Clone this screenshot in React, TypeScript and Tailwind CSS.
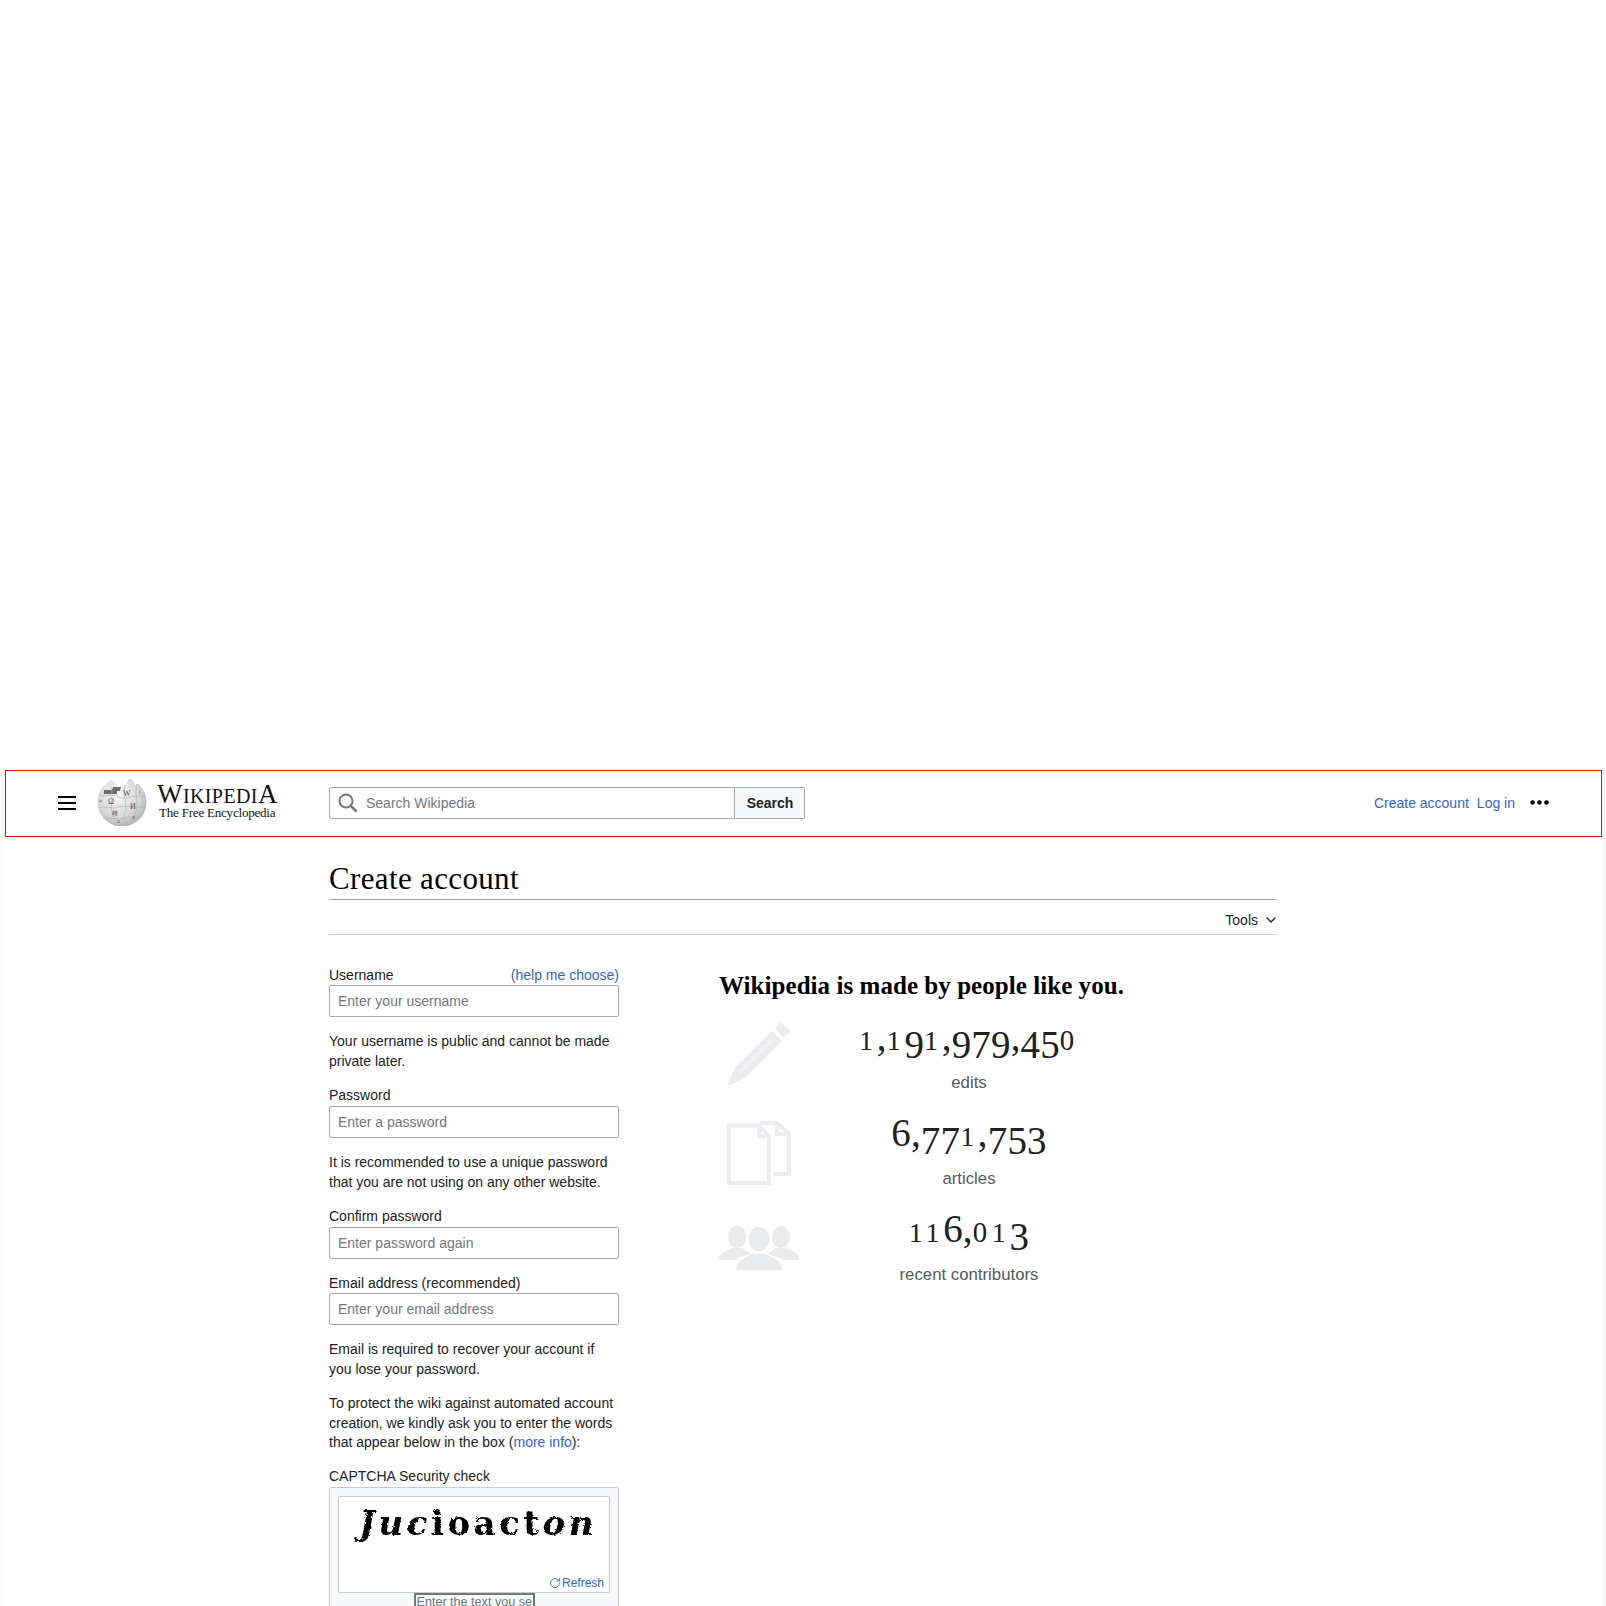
import { RotateCw, ChevronDown } from 'lucide-react'

const sans = "font-['Liberation_Sans',Arial,sans-serif]"
const serif = "font-['Liberation_Serif','Times_New_Roman',serif]"

// Georgia style old-style figures, the installed serif only has lining ones
function OldStyle({ value }: { value: string }) {
  return (
    <span>
      {value.split('').map((c, i) => {
        if (c === '0') {
          return <span key={i} className="text-[0.74em] tracking-[0.16em]">{c}</span>
        }
        if (c === '1' || c === '2') {
          return <span key={i} className="text-[0.72em] tracking-[0.13em]">{c}</span>
        }
        if (c === '3' || c === '4' || c === '5' || c === '7' || c === '9') {
          return <span key={i} className="align-[-0.2em]">{c}</span>
        }
        return <span key={i}>{c}</span>
      })}
    </span>
  )
}

function Globe() {
  return (
    <svg width="50" height="47" viewBox="0 0 50 47" className="shrink-0">
      <defs>
        <radialGradient id="globe-shade" cx="0.42" cy="0.36" r="0.72">
          <stop offset="0" stopColor="#f7f7f7" />
          <stop offset="0.6" stopColor="#d9d9d9" />
          <stop offset="1" stopColor="#a9a9a9" />
        </radialGradient>
      </defs>
      <circle cx="25" cy="23" r="24.5" fill="url(#globe-shade)" />
      <path d="M12 -2 L20 6 L18 10 L26 9 L30 3 L33 -2 Z" fill="#fff" />
      <path d="M4 5 L11 0 L9 7 Z M36 0 L44 4 L38 6 Z" fill="#fff" />
      <path d="M7 11 H15 L16 8 H24 L23 12 H20 V15 H7 Z" fill="#6b6b6b" />
      <g fill="none" stroke="#b3b3b3" strokeWidth="0.7">
        <path d="M2 16 C10 19 14 14 22 18 S36 14 48 18" />
        <path d="M1 29 C9 26 14 31 22 28 S38 31 49 27" />
        <path d="M6 40 C14 37 20 42 28 39 S38 41 43 38" />
        <path d="M14 8 C17 18 12 26 16 36 S16 42 18 47" />
        <path d="M28 6 C25 16 31 24 28 34 S30 42 28 47" />
        <path d="M40 5 C37 15 42 24 39 32 S39 38 37 43" />
      </g>
      <g fill="#4d4d4d" fontFamily="'Liberation Serif',serif">
        <text x="11" y="25" fontSize="8">Ω</text>
        <text x="26" y="17" fontSize="8">W</text>
        <text x="33" y="30" fontSize="8">И</text>
        <text x="15" y="36" fontSize="6">維</text>
        <text x="42" y="15" fontSize="5">ا</text>
        <text x="2" y="23" fontSize="5">ψ</text>
        <text x="35" y="40" fontSize="5">ק</text>
        <text x="20" y="44" fontSize="4">వి</text>
      </g>
    </svg>
  )
}

function Header() {
  return (
    <header className="h-[67px] border border-[#ff0000] flex items-center pl-[52px] pr-[52px] pb-[2px]">
      <div className="w-[18px] flex flex-col gap-[4px] shrink-0">
        <div className="h-[2px] bg-black" />
        <div className="h-[2px] bg-black" />
        <div className="h-[2px] bg-black" />
      </div>
      <div className="ml-[21px]">
        <Globe />
      </div>
      <div className={`${serif} ml-[10px] mb-[2px] w-[120px] shrink-0 text-[#111] flex flex-col`}>
        <div className="h-[22px] leading-[22px] whitespace-nowrap text-[20px] tracking-[0.4px]">
          <span className="text-[27px]">W</span>IKIPEDI<span className="text-[27px]">A</span>
        </div>
        <div className="ml-[2px] h-[15px] leading-[15px] whitespace-nowrap text-[13px] tracking-[-0.2px]">The Free Encyclopedia</div>
      </div>
      <div className={`${sans} ml-[52px] w-[476px] h-8 flex text-sm shrink-0`}>
        <div className="flex-1 flex items-center border border-[#a2a9b1] rounded-l-[2px] pl-[8px]">
          <svg width="20" height="20" viewBox="0 0 20 20" className="shrink-0 fill-none stroke-[#6f757b]">
            <circle cx="8" cy="8" r="6.5" strokeWidth="2" />
            <path d="M12.8 12.8 L18.5 18.5" strokeWidth="2.6" />
          </svg>
          <input placeholder="Search Wikipedia" className="ml-[8px] flex-1 outline-none placeholder:text-[#72777d]" />
        </div>
        <button className="w-[70px] pl-px border border-l-0 border-[#a2a9b1] rounded-r-[2px] bg-[#f8f9fa] font-bold text-[#202122]">Search</button>
      </div>
      <nav className={`${sans} ml-auto flex items-center text-sm text-[#3366cc]`}>
        <a>Create account</a>
        <a className="ml-2">Log in</a>
        <svg width="19" height="5" viewBox="0 0 19 5" className="ml-[15px]">
          <circle cx="2.5" cy="2.5" r="2.3" fill="#000" />
          <circle cx="9.5" cy="2.5" r="2.3" fill="#000" />
          <circle cx="16.5" cy="2.5" r="2.3" fill="#000" />
        </svg>
      </nav>
    </header>
  )
}

function Field({ label, placeholder, className, tight }: { label: string; placeholder: string; className: string; tight?: boolean }) {
  return (
    <div className={className}>
      <label className={tight ? 'block leading-[18px] pb-[2px]' : 'block leading-5'}>{label}</label>
      <input
        placeholder={placeholder}
        className="block w-full h-8 border border-[#a2a9b1] rounded-[2px] px-2 outline-none placeholder:text-[#72777d]"
      />
    </div>
  )
}

function Captcha() {
  return (
    <div className="mt-px border border-[#c8ccd1] rounded-[2px] bg-[#f8f9fa] pt-2 px-2 h-[130px]">
      <svg className="absolute w-0 h-0">
        <filter id="captcha-rough">
          <feTurbulence type="fractalNoise" baseFrequency="0.35" numOctaves="2" seed="4" />
          <feDisplacementMap in="SourceGraphic" scale="3" />
          <feGaussianBlur stdDeviation="0.5" />
        </filter>
      </svg>
      <div className="h-[97px] bg-white border border-[#c8ccd1] rounded-[2px] flex flex-col">
        <div className={`font-['DejaVu_Serif',serif] mt-[6px] pl-[20px] h-[40px] leading-[40px] whitespace-nowrap text-[34px] font-bold text-black tracking-[3.5px] [filter:url(#captcha-rough)]`}>
          <span className="italic">Juc</span>
          <span>ioact</span>
          <span className="italic">on</span>
        </div>
        <div className="mt-auto mb-px mr-[5px] flex justify-end items-center text-xs leading-4 text-[#3366cc]">
          <RotateCw size={12} strokeWidth={2} className="mr-px text-[#4b77d6]" />
          <a>Refresh</a>
        </div>
      </div>
      <input
        placeholder="Enter the text you see on the image"
        className="block mx-auto w-[121px] h-[18px] border-2 border-[#767676] px-px text-[12.6px] outline-none placeholder:text-[#72777d]"
      />
    </div>
  )
}

function Stat({ icon, num, label, className }: { icon: React.ReactNode; num: string; label: string; className: string }) {
  return (
    <div className={`flex h-[96px] ${className}`}>
      <div className="w-20 flex justify-center shrink-0">{icon}</div>
      <div className="w-[340px] text-center">
        <div className={`${serif} h-[51px] leading-[30px] text-[39px] text-[#202122] tracking-[0.15px]`}>
          <OldStyle value={num} />
        </div>
        <div className="text-[16.8px] leading-5 text-[#54595d]">{label}</div>
      </div>
    </div>
  )
}

export default function App() {
  return (
    <div className={`${sans} h-screen overflow-hidden bg-white`}>
      <div className="h-[770px]" />
      <div className="h-[836px] bg-[#f8f9fa] pl-[5px] pr-[4px]">
        <div className="h-full bg-white">
          <Header />
          <main className="pl-[324px] w-[1272px] text-sm text-[#202122]">
            <h1 className={`${serif} pt-[22px] h-[63px] leading-[40px] text-[31px] tracking-[0.35px] text-black border-b border-[#a2a9b1]`}>
              Create account
            </h1>
            <div className="h-[35px] pt-[6px] flex items-center justify-end border-b border-[#c8ccd1]">
              <span>Tools</span>
              <ChevronDown size={16} strokeWidth={2} className="ml-[5px] -mr-[2px]" />
            </div>
            <div className="flex gap-[100px] pt-[30px]">
              <div className="w-[290px] shrink-0">
                <div className="flex justify-between leading-5">
                  <label>Username</label>
                  <a className="text-[#3366cc]">(help me choose)</a>
                </div>
                <input
                  placeholder="Enter your username"
                  className="block w-full h-8 border border-[#a2a9b1] rounded-[2px] px-2 outline-none placeholder:text-[#72777d]"
                />
                <p className="mt-[14px] leading-5">Your username is public and cannot be made private later.</p>
                <Field className="mt-[15px]" tight label="Password" placeholder="Enter a password" />
                <p className="mt-[14px] leading-5">It is recommended to use a unique password that you are not using on any other website.</p>
                <Field className="mt-[15px]" tight label="Confirm password" placeholder="Enter password again" />
                <Field className="mt-[14px]" label="Email address (recommended)" placeholder="Enter your email address" />
                <p className="mt-[14px] leading-5">Email is required to recover your account if you lose your password.</p>
                <p className="mt-[15px] leading-[19.6px]">
                  To protect the wiki against automated account creation, we kindly ask you to enter the words that appear below in the box (<a className="text-[#3366cc]">more info</a>):
                </p>
                <label className="block mt-[13px] leading-5">CAPTCHA Security check</label>
                <Captcha />
              </div>
              <div className="w-[500px]">
                <h2 className={`${serif} mt-[7px] h-[28px] leading-[28px] text-[25px] font-bold text-black tracking-[0.05px] whitespace-nowrap`}>
                  Wikipedia is made by people like you.
                </h2>
                <Stat
                  className="mt-[22px]"
                  num="1,191,979,450"
                  label="edits"
                  icon={
                    <svg width="64" height="64" viewBox="0 0 64 64" className="fill-[#eaecf0]">
                      <path d="M53 0.5 L64 8.5 L56.5 16 L48 6 Z" />
                      <path d="M45 9 L55 19 L18 56 L0 64 L8 46 Z" />
                      <path d="M46 17 L13 50" stroke="#f6f6f7" strokeWidth="1.5" />
                    </svg>
                  }
                />
                <Stat
                  num="6,771,753"
                  label="articles"
                  icon={
                    <svg width="64" height="64" viewBox="0 0 64 64" className="fill-none stroke-[#eaecf0] stroke-[4] mt-[3px]">
                      <path d="M2 4.5 H32 L42 15 V62 H2 Z" />
                      <path d="M32 4.5 V15 H42" />
                      <path d="M33 2 H50 L62 13 V53 H46" />
                      <path d="M50 2 V13 H62" />
                    </svg>
                  }
                />
                <Stat
                  num="116,013"
                  label="recent contributors"
                  icon={
                    <svg width="80" height="46" viewBox="0 0 80 46" className="fill-[#e8eaeb] mt-[12px]">
                      <ellipse cx="18" cy="11" rx="9" ry="11" />
                      <path d="M0 34 C0 26 8 25 13 22 H23 C27 25 30 26 31 28 L16 33 V34 Z" />
                      <ellipse cx="62" cy="11" rx="9" ry="11" />
                      <path d="M80 34 C80 26 72 25 67 22 H57 C53 25 50 26 49 28 L64 33 V34 Z" />
                      <ellipse cx="40" cy="13" rx="11" ry="13" stroke="#fff" strokeWidth="1.5" />
                      <path d="M16 45 C16 33 26 32 33 27 H47 C54 32 64 33 64 45 Z" stroke="#fff" strokeWidth="1.5" />
                    </svg>
                  }
                />
              </div>
            </div>
          </main>
        </div>
      </div>
    </div>
  )
}
